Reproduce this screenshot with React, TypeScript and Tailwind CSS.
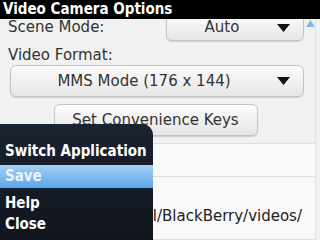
import React from 'react';

const font = { fontFamily: '"DejaVu Sans", sans-serif' };

function Caret() {
  return (
    <svg width="13" height="8" viewBox="0 0 13 8" className="shrink-0">
      <path d="M0 0 H13 L6.5 8 Z" fill="#111" />
    </svg>
  );
}

function Dropdown({ label, className }: { label: string; className: string }) {
  return (
    <div
      className={`flex items-center border border-[#c4c4c4] bg-gradient-to-b from-[#fbfbfb] to-[#e6e6e6] shadow-[0_1px_1px_rgba(0,0,0,0.15)] ${className}`}
    >
      <span className="flex-1 text-center text-[#333] text-[15px] leading-none">{label}</span>
      <span className="pr-[13px]">
        <Caret />
      </span>
    </div>
  );
}

export default function App() {
  return (
    <div className="relative w-[320px] h-[240px] overflow-hidden bg-[#f1f1f1] text-[#222]" style={font}>
      <div className="relative z-10 h-[19px] bg-black px-[3px] text-white text-[15px] font-bold leading-[19px] font-stretch-condensed [font-family:'DejaVu_Sans_Condensed','DejaVu_Sans',sans-serif]">
        Video Camera Options
      </div>

      <div className="mr-[4px] border-r border-[#e2e2e2]">
        <div className="flex items-center -mt-[5px] h-[27px]">
          <span className="pl-[8px] text-[15px] leading-none text-[#333]">Scene Mode:</span>
          <Dropdown label="Auto" className="ml-auto h-[27px] w-[138px] rounded-b-[6px]" />
          <svg width="9" height="7" viewBox="0 0 9 7" className="ml-[2px] mt-[-8px]">
            <path d="M0 7 L4.5 0 L9 7 Z" fill="#7fb6e4" />
          </svg>
        </div>
        <div className="pl-[8px] pt-[5px] h-[25px] text-[15px] leading-[18px] text-[#333]">Video Format:</div>
        <div className="px-[10px]">
          <Dropdown label="MMS Mode (176 x 144)" className="h-[32px] rounded-[6px] mt-[-1px] mr-[1px]" />
        </div>
        <div className="flex justify-center pt-[7px] pb-[7px] pr-[4px]">
          <div className="flex items-center justify-center w-[204px] h-[32px] rounded-[6px] border border-[#c4c4c4] bg-gradient-to-b from-[#fbfbfb] to-[#e6e6e6] shadow-[0_1px_1px_rgba(0,0,0,0.15)] text-[15px] text-[#333] leading-none">
            Set Convenience Keys
          </div>
        </div>
        <div className="border-t border-[#e0e0e0] bg-[#f9f9f9] h-[33px]" />
        <div className="border-t border-[#e0e0e0] bg-[#f9f9f9] h-[63px] flex flex-col justify-end pb-[14px]">
          <div className="whitespace-nowrap text-right pr-[13px] text-[15px] leading-[18px] text-[#222]">
            Folder: Internal/BlackBerry/videos/
          </div>
        </div>
        <div className="border-t border-[#e0e0e0] bg-[#f9f9f9] h-[4px]" />
      </div>

      {/* menu overlay */}
      <div className="absolute left-0 bottom-0 z-20 w-[153px] h-[116px] rounded-tr-[11px] bg-gradient-to-b from-[#1b2230] to-[#10151d] pt-[18px] text-white text-[15px] font-bold leading-none font-stretch-condensed [font-family:'DejaVu_Sans_Condensed','DejaVu_Sans',sans-serif]">
        <div className="h-[19px] flex items-center px-[5px]">Switch Application</div>
        <div className="mt-[4px] h-[25px] flex items-center px-[5px] bg-gradient-to-b from-[#a2d0f5] to-[#5ca6e6] border-b-2 border-[#0d2742] text-[#eaf4ff]">
          Save
        </div>
        <div className="mt-[3px] h-[20px] flex items-center px-[5px]">Help</div>
        <div className="mt-[1px] h-[20px] flex items-center px-[5px]">Close</div>
      </div>
    </div>
  );
}
